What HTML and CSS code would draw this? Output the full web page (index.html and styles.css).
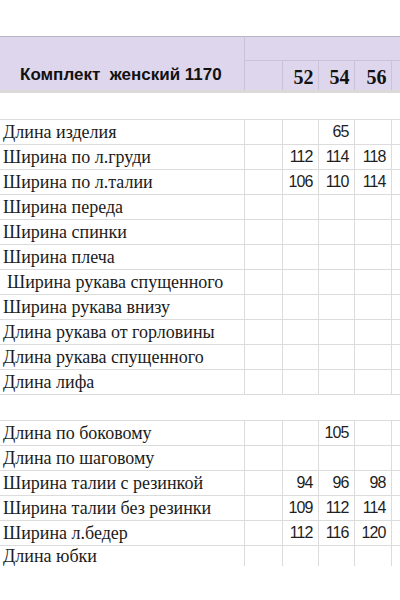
FILE: index.html
```html
<!DOCTYPE html>
<html>
<head>
<meta charset="utf-8">
<link rel="stylesheet" href="styles.css">
</head>
<body>
<div class="page">
  <table class="head">
    <colgroup><col class="c0"><col class="c1"><col class="c2"><col class="c3"><col class="c4"><col class="c5"></colgroup>
    <tr class="h1"><td class="title" rowspan="2">Комплект&nbsp; женский 1170</td><td colspan="5"></td></tr>
    <tr class="h2"><td></td><td class="sz">52</td><td class="sz">54</td><td class="sz">56</td><td></td></tr>
  </table>
  <div class="sep"></div>
  <table class="grid">
    <colgroup><col class="c0"><col class="c1"><col class="c2"><col class="c3"><col class="c4"><col class="c5"></colgroup>
    <tr><td class="lbl">Длина изделия</td><td></td><td></td><td class="n">65</td><td></td><td></td></tr>
    <tr><td class="lbl">Ширина по л.груди</td><td></td><td class="n">112</td><td class="n">114</td><td class="n">118</td><td></td></tr>
    <tr><td class="lbl">Ширина по л.талии</td><td></td><td class="n">106</td><td class="n">110</td><td class="n">114</td><td></td></tr>
    <tr><td class="lbl">Ширина переда</td><td></td><td></td><td></td><td></td><td></td></tr>
    <tr><td class="lbl">Ширина спинки</td><td></td><td></td><td></td><td></td><td></td></tr>
    <tr><td class="lbl">Ширина плеча</td><td></td><td></td><td></td><td></td><td></td></tr>
    <tr><td class="lbl ind">Ширина рукава спущенного</td><td></td><td></td><td></td><td></td><td></td></tr>
    <tr><td class="lbl">Ширина рукава внизу</td><td></td><td></td><td></td><td></td><td></td></tr>
    <tr><td class="lbl">Длина рукава от горловины</td><td></td><td></td><td></td><td></td><td></td></tr>
    <tr><td class="lbl">Длина рукава спущенного</td><td></td><td></td><td></td><td></td><td></td></tr>
    <tr><td class="lbl">Длина лифа</td><td></td><td></td><td></td><td></td><td></td></tr>
    <tr class="gap"><td colspan="6"></td></tr>
    <tr><td class="lbl">Длина по боковому</td><td></td><td></td><td class="n">105</td><td></td><td></td></tr>
    <tr><td class="lbl">Длина по шаговому</td><td></td><td></td><td></td><td></td><td></td></tr>
    <tr><td class="lbl">Ширина талии с резинкой</td><td></td><td class="n">94</td><td class="n">96</td><td class="n">98</td><td></td></tr>
    <tr><td class="lbl">Ширина талии без резинки</td><td></td><td class="n">109</td><td class="n">112</td><td class="n">114</td><td></td></tr>
    <tr><td class="lbl">Ширина л.бедер</td><td></td><td class="n">112</td><td class="n">116</td><td class="n">120</td><td></td></tr>
    <tr class="last"><td class="lbl">Длина юбки</td><td></td><td></td><td></td><td></td><td></td></tr>
  </table>
</div>
</body>
</html>
```

FILE: styles.css
```css
html, body {
  margin: 0;
  padding: 0;
  background: #ffffff;
}
.page {
  width: 400px;
  height: 600px;
  overflow: hidden;
  padding-top: 36px;
  box-sizing: border-box;
}
table {
  width: 400px;
  table-layout: fixed;
  border-collapse: collapse;
  border-spacing: 0;
}
.c0 { width: 244px; }
.c1 { width: 38px; }
.c2 { width: 36px; }
.c3 { width: 36px; }
.c4 { width: 37px; }
.c5 { width: 9px; }
td {
  padding: 0;
}
.head {
  background: #ddd6ec;
  border-top: 1px solid #b9b4c4;
}
.head td {
  border: 1px solid #c9c2d9;
  border-top: none;
  border-bottom: none;
}
.head td:first-child { border-left: none; }
.head .h1 td { height: 23px; border-bottom: 1px solid #c9c2d9; }
.head .h1 td.title { border-bottom: none; }
.head .h2 td { height: 27px; }
.title {
  font-family: "Liberation Sans", Arial, sans-serif;
  font-weight: bold;
  font-size: 17px;
  line-height: 20px;
  color: #111;
  padding-left: 20px;
  padding-top: 23px;
  white-space: nowrap;
  vertical-align: middle;
}
.sz {
  font-family: "Liberation Serif", "Times New Roman", serif;
  font-weight: bold;
  font-size: 20px;
  line-height: 22px;
  color: #111;
  text-align: right;
  padding-right: 4px;
  padding-top: 2px;
  vertical-align: middle;
}
.sep {
  height: 3px;
  background: #dadada;
  margin-bottom: 26px;
}
.grid {
  border-top: 1px solid #dcdcdc;
}
.grid td {
  height: 24px;
  line-height: 20px;
  border: 1px solid #dcdcdc;
  border-top: none;
  vertical-align: middle;
  white-space: nowrap;
  overflow: visible;
}
.grid td:first-child { border-left: none; }
.grid td:last-child { border-right: none; }
.lbl {
  font-family: "Liberation Serif", "Times New Roman", serif;
  font-size: 18px;
  color: #1b1b1b;
  padding-left: 3px;
}
.lbl.ind { padding-left: 7px; }
.n {
  font-family: "Liberation Sans", Arial, sans-serif;
  font-size: 16px;
  letter-spacing: -0.9px;
  color: #1e1e1e;
  text-align: right;
  padding-right: 5px;
}
.grid tr.gap td {
  height: 25px;
  border-left: none;
  border-right: none;
}
.grid tr.last td {
  height: 18px;
  border-bottom: none;
  vertical-align: top;
}
```
